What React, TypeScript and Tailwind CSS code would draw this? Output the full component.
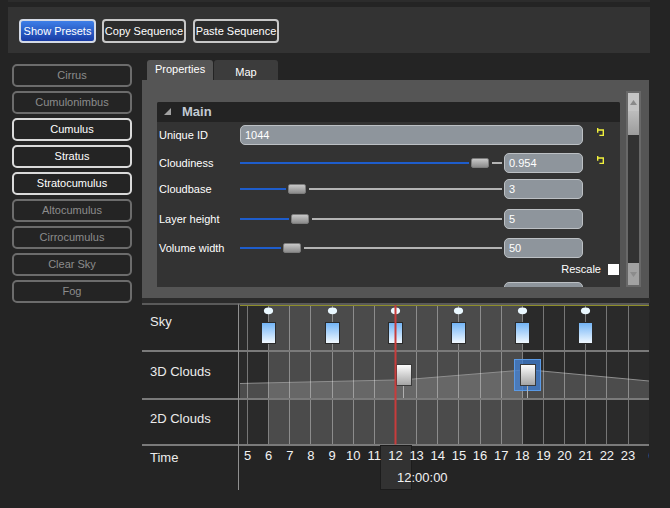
import React from "react";

const presets = [
  { name: "Cirrus", on: false },
  { name: "Cumulonimbus", on: false },
  { name: "Cumulus", on: true },
  { name: "Stratus", on: true },
  { name: "Stratocumulus", on: true },
  { name: "Altocumulus", on: false },
  { name: "Cirrocumulus", on: false },
  { name: "Clear Sky", on: false },
  { name: "Fog", on: false },
];

const sliders = [
  { label: "Cloudiness", value: "0.954", fill: "w-[229px]", top: "mt-[8px]", reset: true },
  { label: "Cloudbase", value: "3", fill: "w-[46px]", top: "mt-[6px]", reset: false },
  { label: "Layer height", value: "5", fill: "w-[49px]", top: "mt-[10px]", reset: false },
  { label: "Volume width", value: "50", fill: "w-[41px]", top: "mt-[9px]", reset: false },
];

// x of an hour tick inside the track svg
const hx = (h: number) => 8.5 + (h - 5) * 21.14;
const px = (h: number) => Math.floor(hx(h)) + 0.5;

function ResetIcon() {
  return (
    <svg width="8" height="9" viewBox="0 0 8 9" className="mb-[5px] ml-[14px] shrink-0">
      <path d="M0.7 0 V4.8 M0.7 2 H6.3 V7.4 H2.4" stroke="#f0f03c" strokeWidth="1.4" fill="none" />
    </svg>
  );
}

function Field({ value, className }: { value: string; className: string }) {
  return (
    <div
      className={`h-[20px] shrink-0 rounded-[5px] border border-[#bcc0c4] bg-[#8e959c] pl-[4px] text-[11px] leading-[18px] text-white ${className}`}
    >
      {value}
    </div>
  );
}

function Slider({ fill }: { fill: string }) {
  return (
    <div className="flex w-[262px] shrink-0 items-center">
      <div className={`h-[2px] bg-[#1e5dcc] ${fill}`} />
      <div className="ml-[2px] h-[10px] w-[18px] shrink-0 rounded-[2px] border border-[#7c7c7c] bg-gradient-to-b from-[#c8c8c8] to-[#8c8c8c]" />
      <div className="ml-[3px] h-[2px] flex-1 bg-[#b4b4b4]" />
    </div>
  );
}

function Tracks() {
  const hours = Array.from({ length: 20 }, (_, i) => i + 5);
  const sky = [6, 9, 12, 15, 18, 21];
  return (
    <svg width="410" height="187" className="block shrink-0">
      <defs>
        <linearGradient id="skyKey" x1="0" y1="0" x2="0" y2="1">
          <stop offset="0" stopColor="#70b3f6" />
          <stop offset="1" stopColor="#f4faff" />
        </linearGradient>
        <linearGradient id="cloudKey" x1="0" y1="0" x2="0" y2="1">
          <stop offset="0" stopColor="#ffffff" />
          <stop offset="1" stopColor="#a2a2a2" />
        </linearGradient>
      </defs>

      <rect x="0" y="0" width="410" height="2" fill="#5a5a5a" />
      <rect x="0" y="2" width="410" height="139" fill="#2a2a2a" />
      <rect x={px(6)} y="2" width={px(18) - px(6)} height="139" fill="#4b4b4b" />

      {/* 3D clouds curve */}
      <polygon points="1,95 1,80.5 164.5,76.8 288.5,66.7 410,78 410,95" fill="rgba(255,255,255,0.16)" />
      <polyline points="1,80.5 164.5,76.8 288.5,66.7 410,78" fill="none" stroke="#8e8e8e" />

      {hours.map((h) => (
        <line key={h} x1={px(h)} x2={px(h)} y1="3" y2="141" stroke="rgba(255,255,255,0.36)" />
      ))}

      <line x1="1" x2="410" y1="2.5" y2="2.5" stroke="#8e8e2a" />

      <rect x="0" y="47" width="410" height="2" fill="#7a7a7a" />
      <rect x="0" y="95" width="410" height="2" fill="#7a7a7a" />
      <rect x="0" y="141" width="410" height="2" fill="#7a7a7a" />

      {sky.map((h) => (
        <g key={h}>
          <ellipse cx={px(h)} cy="7.8" rx="4.6" ry="3.4" fill="#eaf8ff" />
          <rect x={px(h) - 7} y="19.5" width="14" height="21" fill="url(#skyKey)" stroke="#2a2a2a" />
        </g>
      ))}

      {/* 3D clouds keys */}
      <line x1="164.5" x2="164.5" y1="82" y2="95" stroke="#b0b0b0" />
      <rect x="157.5" y="61.5" width="15" height="21" fill="url(#cloudKey)" stroke="#3a3a3a" />
      <rect x="275.5" y="56.5" width="26" height="31" fill="rgba(64,128,214,0.75)" stroke="#5a9ae6" />
      <line x1="288.5" x2="288.5" y1="82" y2="95" stroke="#b0b0b0" />
      <rect x="281.5" y="61.5" width="15" height="21" fill="url(#cloudKey)" stroke="#3a3a3a" />

      {/* time */}
      <rect x="141.5" y="142.5" width="31" height="44" fill="#323232" stroke="#1c1c1c" />
      {hours.map((h) => (
        <text
          key={h}
          x={h === 24 ? 413 : hx(h)}
          y="157"
          textAnchor="middle"
          fontSize="13"
          fill="#f2f2f2"
          fontFamily="Liberation Sans, Arial, sans-serif"
        >
          {h === 24 ? 0 : h}
        </text>
      ))}
      <text x="158" y="179" fontSize="13" fill="#f2f2f2" fontFamily="Liberation Sans, Arial, sans-serif">
        12:00:00
      </text>

      <rect x="155.5" y="2" width="2" height="139.5" fill="#c83c3c" />
    </svg>
  );
}

export default function App() {
  return (
    <div className="relative h-[508px] w-[670px] overflow-hidden bg-[#242424] font-['Liberation_Sans',Arial,sans-serif] text-[11px] text-white">
      {/* toolbar */}
      <div className="ml-[8px] h-[2px] w-[642px] bg-[#2c2c2c]" />
      <div className="ml-[8px] mt-[5px] flex h-[46px] w-[642px] items-start bg-[#333333] pl-[11px] pt-[12px]">
        <button className="flex h-[24px] w-[77px] items-center justify-center rounded-[4px] border-2 border-[#d4dae6] bg-gradient-to-b from-[#3e7fe8] to-[#1a3ca6] text-white">
          Show Presets
        </button>
        <button className="ml-[6px] flex h-[24px] w-[84px] items-center justify-center rounded-[4px] border-2 border-[#c8c8c8] bg-[#2c2c2c] text-white">
          Copy Sequence
        </button>
        <button className="ml-[7px] flex h-[24px] w-[86px] items-center justify-center rounded-[4px] border-2 border-[#c8c8c8] bg-[#2c2c2c] text-white">
          Paste Sequence
        </button>
      </div>

      <div className="mt-[7px] flex">
        {/* presets */}
        <div className="flex w-[142px] shrink-0 flex-col gap-[4px] pl-[12px] pt-[4px]">
          {presets.map((p) => (
            <div
              key={p.name}
              className={
                p.on
                  ? "flex h-[23px] w-[120px] items-center justify-center rounded-[5px] border-2 border-[#dadada] text-white"
                  : "flex h-[23px] w-[120px] items-center justify-center rounded-[5px] border-2 border-[#6c6c6c] text-[#8c8c8c]"
              }
            >
              {p.name}
            </div>
          ))}
        </div>

        <div className="flex w-[508px] shrink-0 flex-col">
          {/* tabs */}
          <div className="flex h-[20px] gap-[1px] pl-[5px]">
            <div className="w-[66px] rounded-t-[3px] bg-[#555555] pl-[8px] pt-[3px] leading-[13px]">Properties</div>
            <div className="w-[64px] rounded-t-[3px] bg-[#3c3c3c] pt-[6px] text-center leading-[13px]">Map</div>
          </div>

          {/* properties panel */}
          <div className="flex h-[218px] w-[507px] bg-[#555555]">
            <div className="ml-[15px] mt-[22px] h-[185px] w-[463px] shrink-0 overflow-hidden rounded-t-[2px] bg-[#333333]">
              <div className="flex h-[20px] items-center bg-[#232323] pl-[7px]">
                <svg width="7" height="7" className="mb-[2px]">
                  <polygon points="7,0 7,7 0,7" fill="#a2a2a2" />
                </svg>
                <span className="ml-[11px] text-[13px] font-bold text-[#c2cad4]">Main</span>
              </div>

              <div className="mt-[3px] flex h-[20px] items-center">
                <div className="w-[83px] shrink-0 pl-[2px]">Unique ID</div>
                <Field value="1044" className="w-[343px]" />
                <ResetIcon />
              </div>

              {sliders.map((s) => (
                <div key={s.label} className={`flex h-[20px] items-center ${s.top}`}>
                  <div className="w-[83px] shrink-0 pl-[2px]">{s.label}</div>
                  <Slider fill={s.fill} />
                  <Field value={s.value} className="ml-[2px] w-[79px]" />
                  {s.reset && <ResetIcon />}
                </div>
              ))}

              <div className="mt-[6px] flex h-[11px] items-center justify-end pr-[1px]">
                <span>Rescale</span>
                <div className="ml-[7px] h-[11px] w-[11px] bg-white" />
              </div>

              <div className="mt-[7px] flex h-[20px] items-center">
                <div className="w-[83px] shrink-0" />
                <div className="flex w-[262px] shrink-0 items-center">
                  <div className="ml-[3px] mt-[10px] h-[10px] w-[18px] rounded-[2px] border border-[#7c7c7c] bg-gradient-to-b from-[#c8c8c8] to-[#8c8c8c]" />
                </div>
                <Field value="" className="ml-[2px] w-[79px]" />
              </div>
            </div>

            {/* scrollbar */}
            <div className="ml-[6px] mt-[11px] flex h-[196px] w-[15px] shrink-0 flex-col bg-[#686868] p-[2px]">
              <div className="flex h-[18px] items-center justify-center bg-[#c4c4c4]">
                <svg width="7" height="5">
                  <polygon points="3.5,0 7,5 0,5" fill="#8a8a8a" />
                </svg>
              </div>
              <div className="h-[24px] bg-gradient-to-b from-[#bdbdbd] to-[#9c9c9c]" />
              <div className="flex-1 bg-[#323232]" />
              <div className="flex h-[22px] items-center justify-center bg-[#a2a2a2]">
                <svg width="7" height="5">
                  <polygon points="0,0 7,0 3.5,5" fill="#8c8c8c" />
                </svg>
              </div>
            </div>
          </div>

          <div className="h-[5px] bg-[#2b2b2b]" />

          {/* timeline */}
          <div className="flex">
            <div className="w-[97px] shrink-0 border-r border-t-2 border-r-[#8f8f8f] border-t-[#5a5a5a] text-[13px] leading-[15px] text-[#ececec]">
              <div className="h-[47px] border-b-2 border-[#7a7a7a] pl-[8px] pt-[9px]">Sky</div>
              <div className="h-[48px] border-b-2 border-[#7a7a7a] pl-[8px] pt-[12px]">3D Clouds</div>
              <div className="h-[46px] border-b-2 border-[#7a7a7a] pl-[8px] pt-[11px]">2D Clouds</div>
              <div className="h-[44px] pl-[8px] pt-[4px]">Time</div>
            </div>
            <Tracks />
          </div>
        </div>
      </div>
    </div>
  );
}
